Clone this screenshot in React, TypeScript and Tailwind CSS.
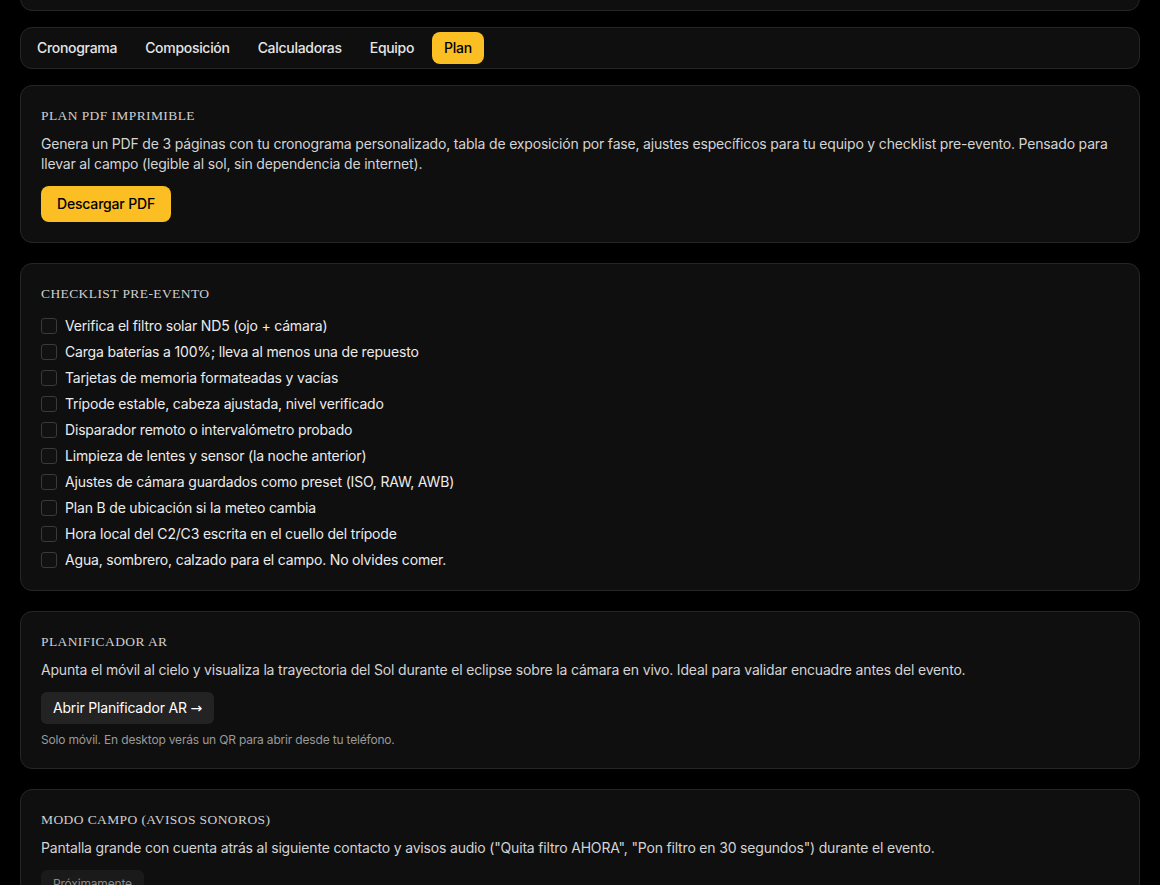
import React from 'react';

const sans = { fontFamily: 'Inter, "Liberation Sans", sans-serif' };

const tabs = ['Cronograma', 'Composición', 'Calculadoras', 'Equipo', 'Plan'];

const checklist = [
	'Verifica el filtro solar ND5 (ojo + cámara)',
	'Carga baterías a 100%; lleva al menos una de repuesto',
	'Tarjetas de memoria formateadas y vacías',
	'Trípode estable, cabeza ajustada, nivel verificado',
	'Disparador remoto o intervalómetro probado',
	'Limpieza de lentes y sensor (la noche anterior)',
	'Ajustes de cámara guardados como preset (ISO, RAW, AWB)',
	'Plan B de ubicación si la meteo cambia',
	'Hora local del C2/C3 escrita en el cuello del trípode',
	'Agua, sombrero, calzado para el campo. No olvides comer.',
];

function Heading({ children }: { children: React.ReactNode }) {
	return (
		<h2 className="font-['Liberation_Serif',serif] text-[13.5px] leading-5 uppercase tracking-[0.03em] text-[#d0d0d0] mb-2">
			{children}
		</h2>
	);
}

function Card({ children }: { children: React.ReactNode }) {
	return (
		<section className="rounded-xl border border-[#262626] bg-[#0f0f0f] p-5">
			{children}
		</section>
	);
}

export default function App() {
	return (
		<div className="min-h-screen bg-black text-[#e5e5e5] tracking-[-0.18px]" style={sans}>
			<div className="mx-5 -mt-[30px] flex flex-col">
				<div className="h-[41px] rounded-xl border border-[#262626] bg-[#0f0f0f]" />

				<nav className="mt-4 flex gap-1 rounded-xl border border-[#262626] bg-[#0f0f0f] p-1">
					{tabs.map((t) => (
						<button
							key={t}
							className={
								t === 'Plan'
									? 'ml-0.5 rounded-lg bg-[#fbbf24] px-3 py-1.5 text-sm font-medium tracking-[-0.3px] text-black'
									: 'rounded-lg px-3 py-1.5 text-sm font-medium tracking-[-0.3px] text-[#e5e5e5]'
							}
						>
							{t}
						</button>
					))}
				</nav>

				<div className="mt-4 flex flex-col gap-5">
					<Card>
						<Heading>Plan PDF imprimible</Heading>
						<p className="text-sm leading-5 text-[#d4d4d4]">
							Genera un PDF de 3 páginas con tu cronograma personalizado, tabla de
							exposición por fase, ajustes específicos para tu equipo y checklist
							pre-evento. Pensado para llevar al campo (legible al sol, sin
							dependencia de internet).
						</p>
						<button className="mt-3 rounded-lg bg-[#fbbf24] px-4 py-2 text-sm font-medium text-black">
							Descargar PDF
						</button>
					</Card>

					<Card>
						<Heading>Checklist pre-evento</Heading>
						<ul className="flex flex-col gap-1.5 pt-1">
							{checklist.map((item) => (
								<li key={item}>
									<label className="flex items-center gap-2 text-sm leading-5 text-[#ececec]">
										<span className="h-4 w-4 shrink-0 rounded-[3px] border border-[#3a3a3a] bg-[#111]" />
										{item}
									</label>
								</li>
							))}
						</ul>
					</Card>

					<Card>
						<Heading>Planificador AR</Heading>
						<p className="text-sm leading-5 text-[#d4d4d4]">
							Apunta el móvil al cielo y visualiza la trayectoria del Sol durante el
							eclipse sobre la cámara en vivo. Ideal para validar encuadre antes del
							evento.
						</p>
						<button className="mt-3 rounded-md bg-[#232323] px-3 py-1.5 text-sm text-white">
							Abrir Planificador AR{' '}
							<span className="font-['DejaVu_Sans',sans-serif]">→</span>
						</button>
						<p className="mt-2 text-xs text-[#9a9a9a]">
							Solo móvil. En desktop verás un QR para abrir desde tu teléfono.
						</p>
					</Card>

					<Card>
						<Heading>Modo campo (avisos sonoros)</Heading>
						<p className="text-sm leading-5 text-[#d4d4d4]">
							Pantalla grande con cuenta atrás al siguiente contacto y avisos audio
							("Quita filtro AHORA", "Pon filtro en 30 segundos") durante el evento.
						</p>
						<span className="mt-3 inline-block rounded-md bg-[#1a1a1a] px-3 py-1.5 text-xs text-[#8a8a8a]">
							Próximamente
						</span>
					</Card>
				</div>
			</div>
		</div>
	);
}
